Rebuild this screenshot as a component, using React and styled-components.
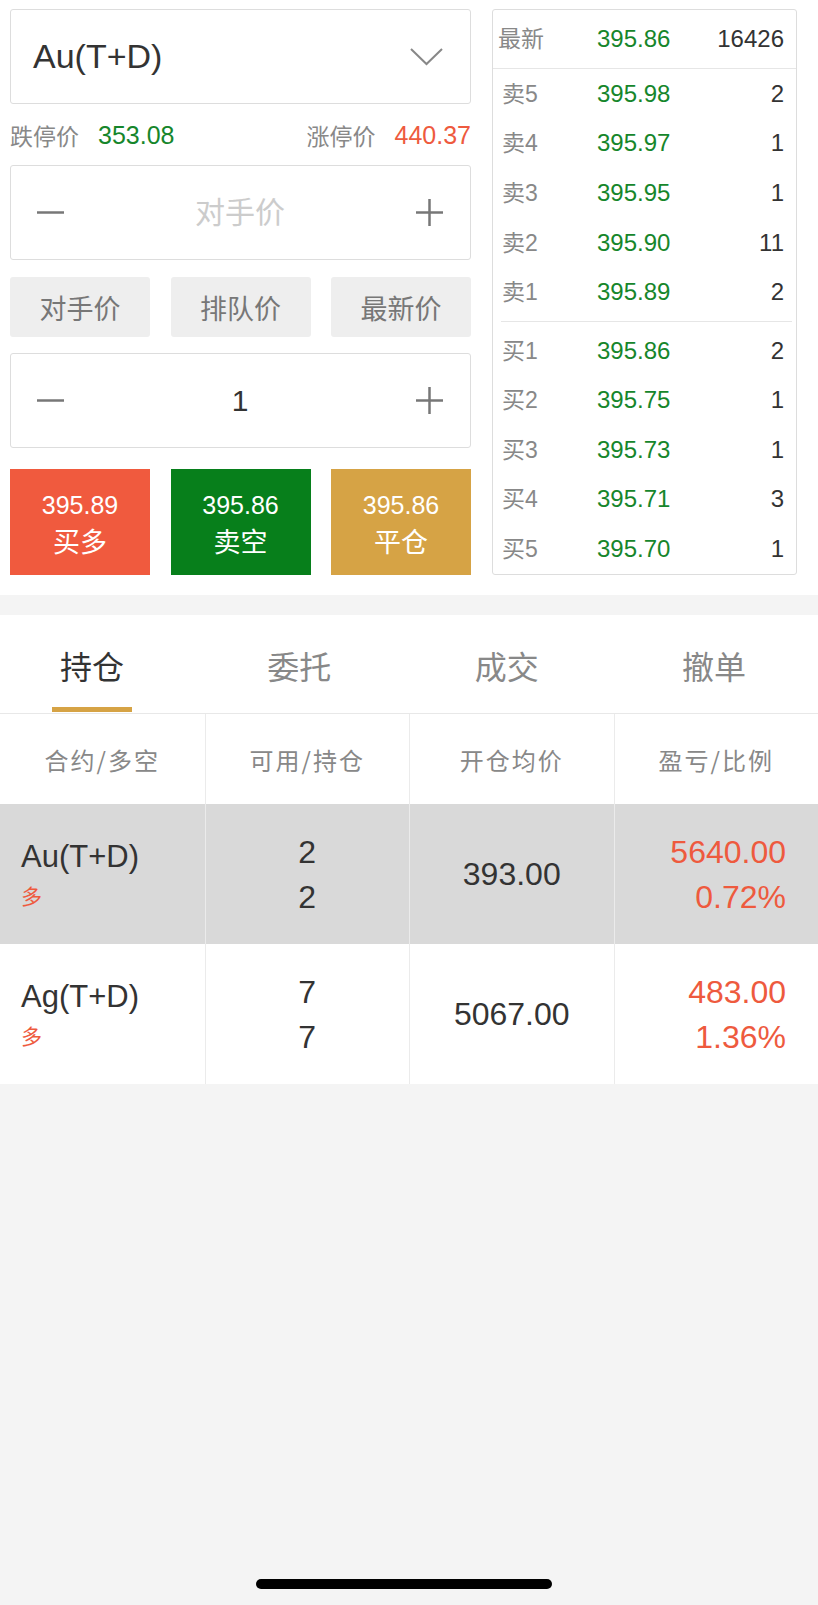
import React from 'react';
import styled, { createGlobalStyle } from 'styled-components';

const COLOR = {
  GREEN: '#16862b',
  RED: '#ee5a3e',
  GOLD: '#d6a345',
  TEXT: '#333333',
  MUTED: '#888888',
  LINE: '#dddddd',
  PAGE: '#f4f4f4',
};

const GlobalStyle = createGlobalStyle`
  html, body {
    margin: 0;
    padding: 0;
    background: ${COLOR.PAGE};
  }
  body {
    font-family: "Liberation Sans", Arial, "Noto Sans CJK SC", sans-serif;
    color: ${COLOR.TEXT};
  }
  * { box-sizing: border-box; }
`;

const Page = styled.div`
  width: 818px;
  min-height: 100vh;
  display: flex;
  flex-direction: column;
  background: ${COLOR.PAGE};
`;

const TopSection = styled.div`
  display: flex;
  gap: 21px;
  padding: 9px 21px 20px 10px;
  background: #fff;
`;

const OrderPanel = styled.div`
  width: 461px;
  display: flex;
  flex-direction: column;
`;

const SelectBox = styled.div`
  height: 95px;
  border: 1px solid ${COLOR.LINE};
  border-radius: 3px;
  display: flex;
  align-items: center;
  justify-content: space-between;
  padding: 0 27px 0 22px;
  font-size: 34px;
  color: ${COLOR.TEXT};
`;

const LimitRow = styled.div`
  height: 61px;
  display: flex;
  align-items: center;
  justify-content: space-between;
`;

const LimitItem = styled.div`
  display: flex;
  align-items: center;
  gap: 19px;
`;

const LimitLabel = styled.span`
  font-family: "Noto Sans CJK SC", sans-serif;
  font-size: 23px;
  line-height: 30px;
  color: ${COLOR.MUTED};
`;

const LimitValue = styled.span`
  font-size: 25px;
  line-height: 30px;
  color: ${(p) => p.color};
`;

const Stepper = styled.div`
  height: 95px;
  margin-top: ${(p) => p.gap}px;
  border: 1px solid ${COLOR.LINE};
  border-radius: 3px;
  display: flex;
  align-items: center;
  justify-content: space-between;
  padding: 0 27px 0 26px;
`;

const StepValue = styled.span`
  font-family: "Liberation Sans", "Noto Sans CJK SC", sans-serif;
  font-size: 30px;
  line-height: 36px;
  color: ${(p) => (p.placeholder ? '#cccccc' : COLOR.TEXT)};
`;

const ButtonRow = styled.div`
  display: grid;
  grid-template-columns: repeat(3, 1fr);
  column-gap: 20.5px;
  margin-top: ${(p) => p.gap}px;
`;

const QuickButton = styled.div`
  height: 60px;
  border-radius: 3px;
  background: #eeeeee;
  display: flex;
  align-items: center;
  justify-content: center;
  font-family: "Noto Sans CJK SC", sans-serif;
  font-size: 27px;
  color: #777777;
`;

const ActionButton = styled.div`
  height: 106px;
  background: ${(p) => p.bg};
  color: #fff;
  display: flex;
  flex-direction: column;
  align-items: center;
  justify-content: center;
  gap: 6px;
  padding-top: 4px;
`;

const ActionPrice = styled.span`
  font-size: 25px;
  line-height: 28px;
`;

const ActionLabel = styled.span`
  font-family: "Noto Sans CJK SC", sans-serif;
  font-size: 27px;
  line-height: 32px;
`;

const BookPanel = styled.div`
  width: 305px;
  height: 566px;
  border: 1px solid ${COLOR.LINE};
  border-radius: 3px;
  display: flex;
  flex-direction: column;
`;

const BookHeader = styled.div`
  height: 59px;
  border-bottom: 1px solid #e6e6e6;
  display: grid;
  grid-template-columns: 99px 1fr auto;
  align-items: center;
  padding: 0 12px 0 5px;
`;

const BookGroup = styled.div`
  display: flex;
  flex-direction: column;
`;

const BookRow = styled.div`
  height: ${(p) => p.h}px;
  display: grid;
  grid-template-columns: 95px 1fr auto;
  align-items: center;
  padding: 0 12px 0 9px;
`;

const BookDivider = styled.div`
  height: 1px;
  margin: 4px 4px 4px 8px;
  background: #e6e6e6;
`;

const BookLabel = styled.span`
  font-family: "Liberation Sans", "Noto Sans CJK SC", sans-serif;
  font-size: 23px;
  line-height: 28px;
  color: ${COLOR.MUTED};
`;

const BookPrice = styled.span`
  font-size: 24px;
  line-height: 28px;
  color: ${COLOR.GREEN};
`;

const BookQty = styled.span`
  font-size: 24px;
  line-height: 28px;
  color: ${COLOR.TEXT};
  text-align: right;
`;

const SectionGap = styled.div`
  height: 20px;
  background: ${COLOR.PAGE};
`;

const TabBar = styled.div`
  height: 99px;
  background: #fff;
  border-bottom: 1px solid #e8e8e8;
  display: flex;
  justify-content: space-between;
  padding: 0 64px 0 52px;
`;

const Tab = styled.div`
  width: 80px;
  display: flex;
  flex-direction: column;
  align-items: center;
  padding-top: 31px;
  font-family: "Noto Sans CJK SC", sans-serif;
  font-size: 32px;
  line-height: 38px;
  color: ${(p) => (p.active ? COLOR.TEXT : COLOR.MUTED)};
`;

const TabLine = styled.div`
  width: 80px;
  height: 5px;
  margin-top: auto;
  margin-bottom: 1px;
  background: ${(p) => (p.active ? COLOR.GOLD : 'transparent')};
`;

const TableRow = styled.div`
  display: grid;
  grid-template-columns: repeat(4, 1fr);
  height: ${(p) => p.h}px;
  background: ${(p) => p.bg || '#fff'};
`;

const Cell = styled.div`
  display: flex;
  flex-direction: column;
  justify-content: center;
  align-items: ${(p) => p.align || 'center'};
  padding: ${(p) => (p.align === 'flex-start' ? '0 0 0 21px' : p.align === 'flex-end' ? '0 32px 0 0' : '0')};
  border-left: ${(p) => (p.first ? 'none' : '1px solid #ebebeb')};
  gap: ${(p) => p.gap || 0}px;
`;

const HeadText = styled.span`
  font-family: "Noto Sans CJK SC", sans-serif;
  font-size: 24px;
  letter-spacing: 2px;
  color: ${COLOR.MUTED};
`;

const CellText = styled.span`
  font-size: ${(p) => (p.name ? 31 : 32)}px;
  line-height: 36px;
  color: ${(p) => p.color || COLOR.TEXT};
`;

const SideTag = styled.span`
  font-family: "Noto Sans CJK SC", sans-serif;
  font-size: 21px;
  line-height: 28px;
  margin-top: 6px;
  color: ${COLOR.RED};
`;

const Filler = styled.div`
  flex: 1;
  display: flex;
  align-items: flex-end;
  justify-content: center;
  padding-bottom: 16px;
`;

const HomeBar = styled.div`
  width: 296px;
  height: 10px;
  border-radius: 5px;
  background: #000;
  margin-right: 10px;
`;

const Minus = () => (
  <svg width="27" height="27" viewBox="0 0 27 27">
    <line x1="0" y1="13.5" x2="27" y2="13.5" stroke="#777" strokeWidth="2.5" />
  </svg>
);

const Plus = () => (
  <svg width="27" height="27" viewBox="0 0 27 27">
    <line x1="0" y1="13.5" x2="27" y2="13.5" stroke="#777" strokeWidth="2.5" />
    <line x1="13.5" y1="0" x2="13.5" y2="27" stroke="#777" strokeWidth="2.5" />
  </svg>
);

const Chevron = () => (
  <svg width="33" height="18" viewBox="0 0 33 18">
    <polyline points="1,1 16.5,16 32,1" fill="none" stroke="#888" strokeWidth="2" />
  </svg>
);

const sells = [
  ['卖5', '395.98', '2'],
  ['卖4', '395.97', '1'],
  ['卖3', '395.95', '1'],
  ['卖2', '395.90', '11'],
  ['卖1', '395.89', '2'],
];

const buys = [
  ['买1', '395.86', '2'],
  ['买2', '395.75', '1'],
  ['买3', '395.73', '1'],
  ['买4', '395.71', '3'],
  ['买5', '395.70', '1'],
];

const positions = [
  { name: 'Au(T+D)', qty: '2', price: '393.00', pnl: '5640.00', ratio: '0.72%', bg: '#d9d9d9' },
  { name: 'Ag(T+D)', qty: '7', price: '5067.00', pnl: '483.00', ratio: '1.36%' },
];

const tabs = ['持仓', '委托', '成交', '撤单'];
const heads = ['合约/多空', '可用/持仓', '开仓均价', '盈亏/比例'];

const App = () => (
  <>
    <GlobalStyle />
    <Page>
      <TopSection>
        <OrderPanel>
          <SelectBox>
            <span>Au(T+D)</span>
            <Chevron />
          </SelectBox>
          <LimitRow>
            <LimitItem>
              <LimitLabel>跌停价</LimitLabel>
              <LimitValue color={COLOR.GREEN}>353.08</LimitValue>
            </LimitItem>
            <LimitItem>
              <LimitLabel>涨停价</LimitLabel>
              <LimitValue color={COLOR.RED}>440.37</LimitValue>
            </LimitItem>
          </LimitRow>
          <Stepper gap={0}>
            <Minus />
            <StepValue placeholder>对手价</StepValue>
            <Plus />
          </Stepper>
          <ButtonRow gap={17}>
            <QuickButton>对手价</QuickButton>
            <QuickButton>排队价</QuickButton>
            <QuickButton>最新价</QuickButton>
          </ButtonRow>
          <Stepper gap={16}>
            <Minus />
            <StepValue>1</StepValue>
            <Plus />
          </Stepper>
          <ButtonRow gap={21}>
            <ActionButton bg="#f05a3e">
              <ActionPrice>395.89</ActionPrice>
              <ActionLabel>买多</ActionLabel>
            </ActionButton>
            <ActionButton bg="#077f1b">
              <ActionPrice>395.86</ActionPrice>
              <ActionLabel>卖空</ActionLabel>
            </ActionButton>
            <ActionButton bg={COLOR.GOLD}>
              <ActionPrice>395.86</ActionPrice>
              <ActionLabel>平仓</ActionLabel>
            </ActionButton>
          </ButtonRow>
        </OrderPanel>

        <BookPanel>
          <BookHeader>
            <BookLabel>最新</BookLabel>
            <BookPrice>395.86</BookPrice>
            <BookQty>16426</BookQty>
          </BookHeader>
          <BookGroup>
            {sells.map(([label, price, qty]) => (
              <BookRow key={label} h={49.6}>
                <BookLabel>{label}</BookLabel>
                <BookPrice>{price}</BookPrice>
                <BookQty>{qty}</BookQty>
              </BookRow>
            ))}
          </BookGroup>
          <BookDivider />
          <BookGroup>
            {buys.map(([label, price, qty]) => (
              <BookRow key={label} h={49.5}>
                <BookLabel>{label}</BookLabel>
                <BookPrice>{price}</BookPrice>
                <BookQty>{qty}</BookQty>
              </BookRow>
            ))}
          </BookGroup>
        </BookPanel>
      </TopSection>

      <SectionGap />

      <TabBar>
        {tabs.map((t, i) => (
          <Tab key={t} active={i === 0}>
            {t}
            <TabLine active={i === 0} />
          </Tab>
        ))}
      </TabBar>

      <TableRow h={90}>
        {heads.map((h, i) => (
          <Cell key={h} first={i === 0}>
            <HeadText>{h}</HeadText>
          </Cell>
        ))}
      </TableRow>

      {positions.map((p) => (
        <TableRow key={p.name} h={140} bg={p.bg}>
          <Cell first align="flex-start">
            <CellText name>{p.name}</CellText>
            <SideTag>多</SideTag>
          </Cell>
          <Cell gap={9}>
            <CellText>{p.qty}</CellText>
            <CellText>{p.qty}</CellText>
          </Cell>
          <Cell>
            <CellText>{p.price}</CellText>
          </Cell>
          <Cell align="flex-end" gap={9}>
            <CellText color={COLOR.RED}>{p.pnl}</CellText>
            <CellText color={COLOR.RED}>{p.ratio}</CellText>
          </Cell>
        </TableRow>
      ))}

      <Filler>
        <HomeBar />
      </Filler>
    </Page>
  </>
);

export default App;
